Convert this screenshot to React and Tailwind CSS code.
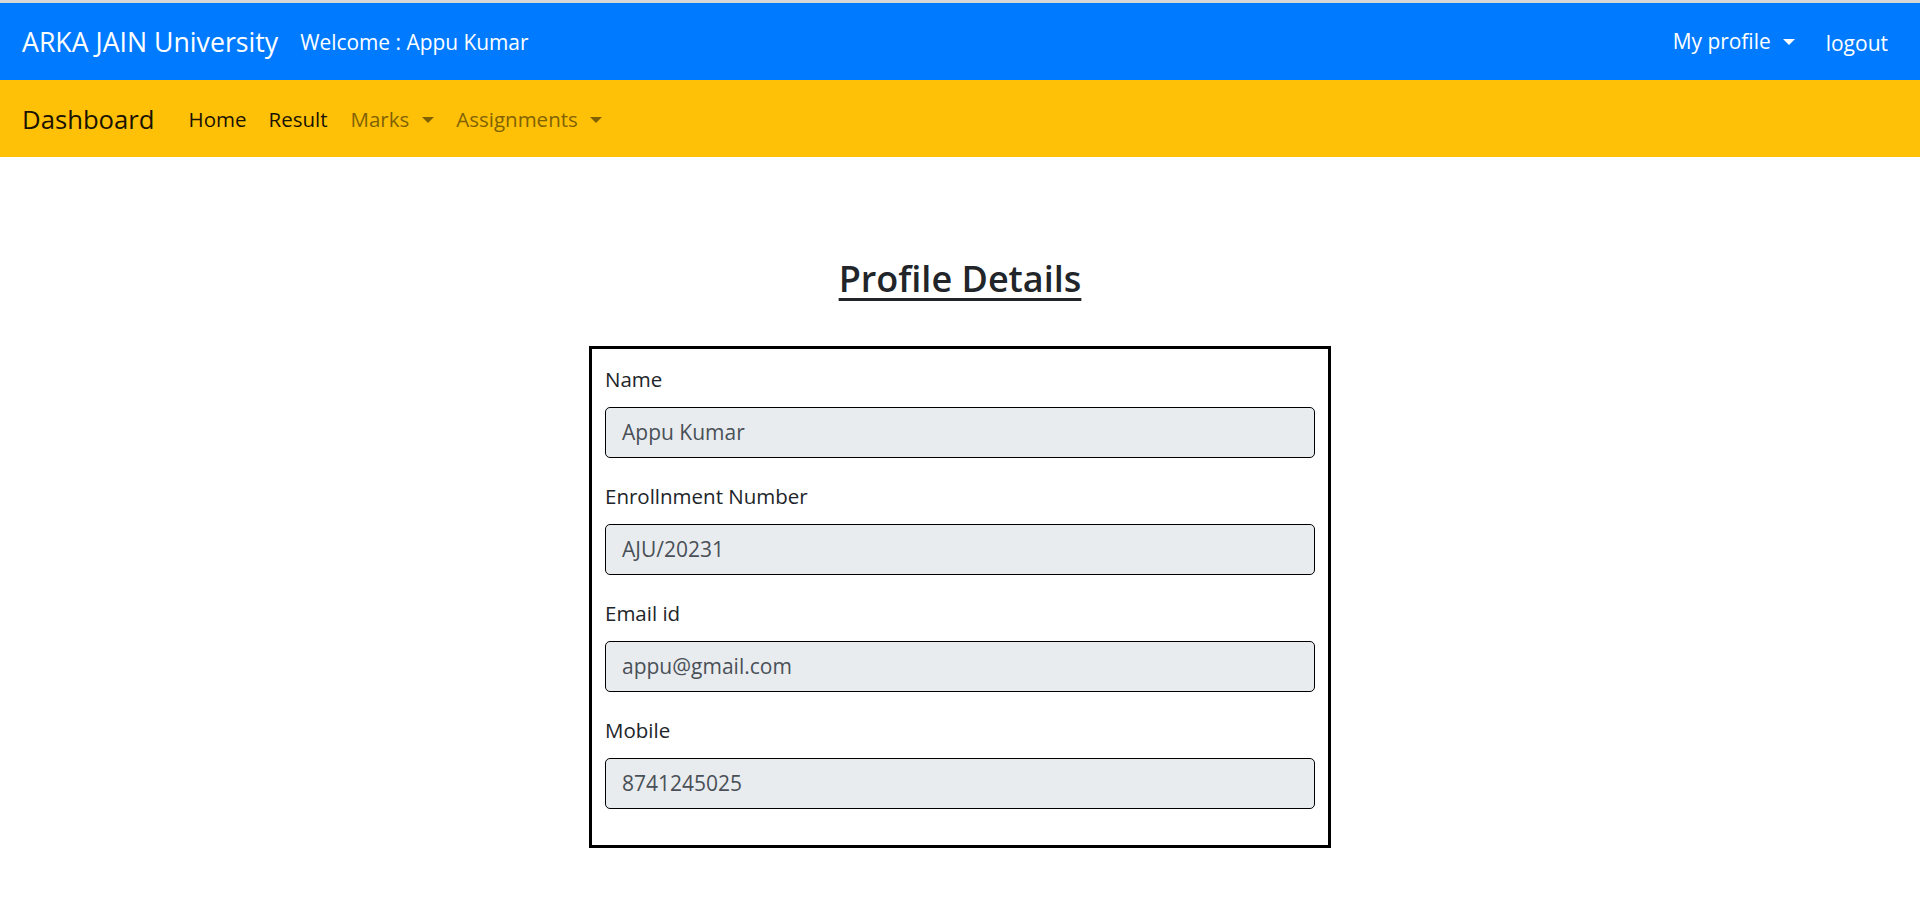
export default function App() {
  const fields = [
    { label: "Name", value: "Appu Kumar" },
    { label: "Enrollnment Number", value: "AJU/20231" },
    { label: "Email id", value: "appu@gmail.com" },
    { label: "Mobile", value: "8741245025" },
  ];
  return (
    <div className="min-h-[904px] bg-white font-['Open_Sans','Noto_Sans',sans-serif]">
      <div className="h-[3px] bg-[#d6d6d6]" />
      <nav className="h-[77px] bg-[#007bff] flex items-center px-[22px] text-white">
        <span className="text-[26.7px] leading-none mt-[2px]">ARKA JAIN University</span>
        <span className="ml-[22px] text-[20.9px] leading-none mt-[2px]">Welcome : Appu Kumar</span>
        <div className="ml-auto flex items-center">
          <span className="text-[20.9px] leading-none flex items-center">
            My profile
            <span className="ml-[12px] w-0 h-0 border-t-[6px] border-t-white border-x-[6px] border-x-transparent" />
          </span>
          <span className="ml-[31px] text-[21px] leading-none mt-[4px] mr-[10px]">logout</span>
        </div>
      </nav>
      <nav className="h-[77px] bg-[#ffc107] flex items-center px-[22px]">
        <span className="text-[25.7px] leading-none text-[#1a1301] mt-[2px]">Dashboard</span>
        <div className="ml-[34px] flex items-center text-[20.5px] leading-none mt-[2px]">
          <span className="text-[#1a1301]">Home</span>
          <span className="ml-[22px] text-[#1a1301]">Result</span>
          <span className="ml-[23px] text-[#806104] flex items-center">
            Marks
            <span className="ml-[13px] w-0 h-0 border-t-[6px] border-t-[#806104] border-x-[6px] border-x-transparent" />
          </span>
          <span className="ml-[22px] text-[#806104] flex items-center">
            Assignments
            <span className="ml-[12px] w-0 h-0 border-t-[6px] border-t-[#806104] border-x-[6px] border-x-transparent" />
          </span>
        </div>
      </nav>
      <main className="flex flex-col items-center pt-[100px]">
        <h3 className="text-[36px] leading-[43px] font-semibold text-[#212529] underline underline-offset-[6px] decoration-[3px]">
          Profile Details
        </h3>
        <div className="mt-[46px] w-[742px] border-[3px] border-black pt-[14px] px-[13px] pb-[14px]">
          {fields.map((f) => (
            <div key={f.label} className="mb-[22px]">
              <div className="text-[20.5px] leading-[33px] text-[#212529]">{f.label}</div>
              <div className="mt-[11px] h-[51px] rounded-[5px] border border-black bg-[#e9ecef] flex items-center pl-[16px] text-[21px] text-[#495057]">
                {f.value}
              </div>
            </div>
          ))}
        </div>
      </main>
    </div>
  );
}
